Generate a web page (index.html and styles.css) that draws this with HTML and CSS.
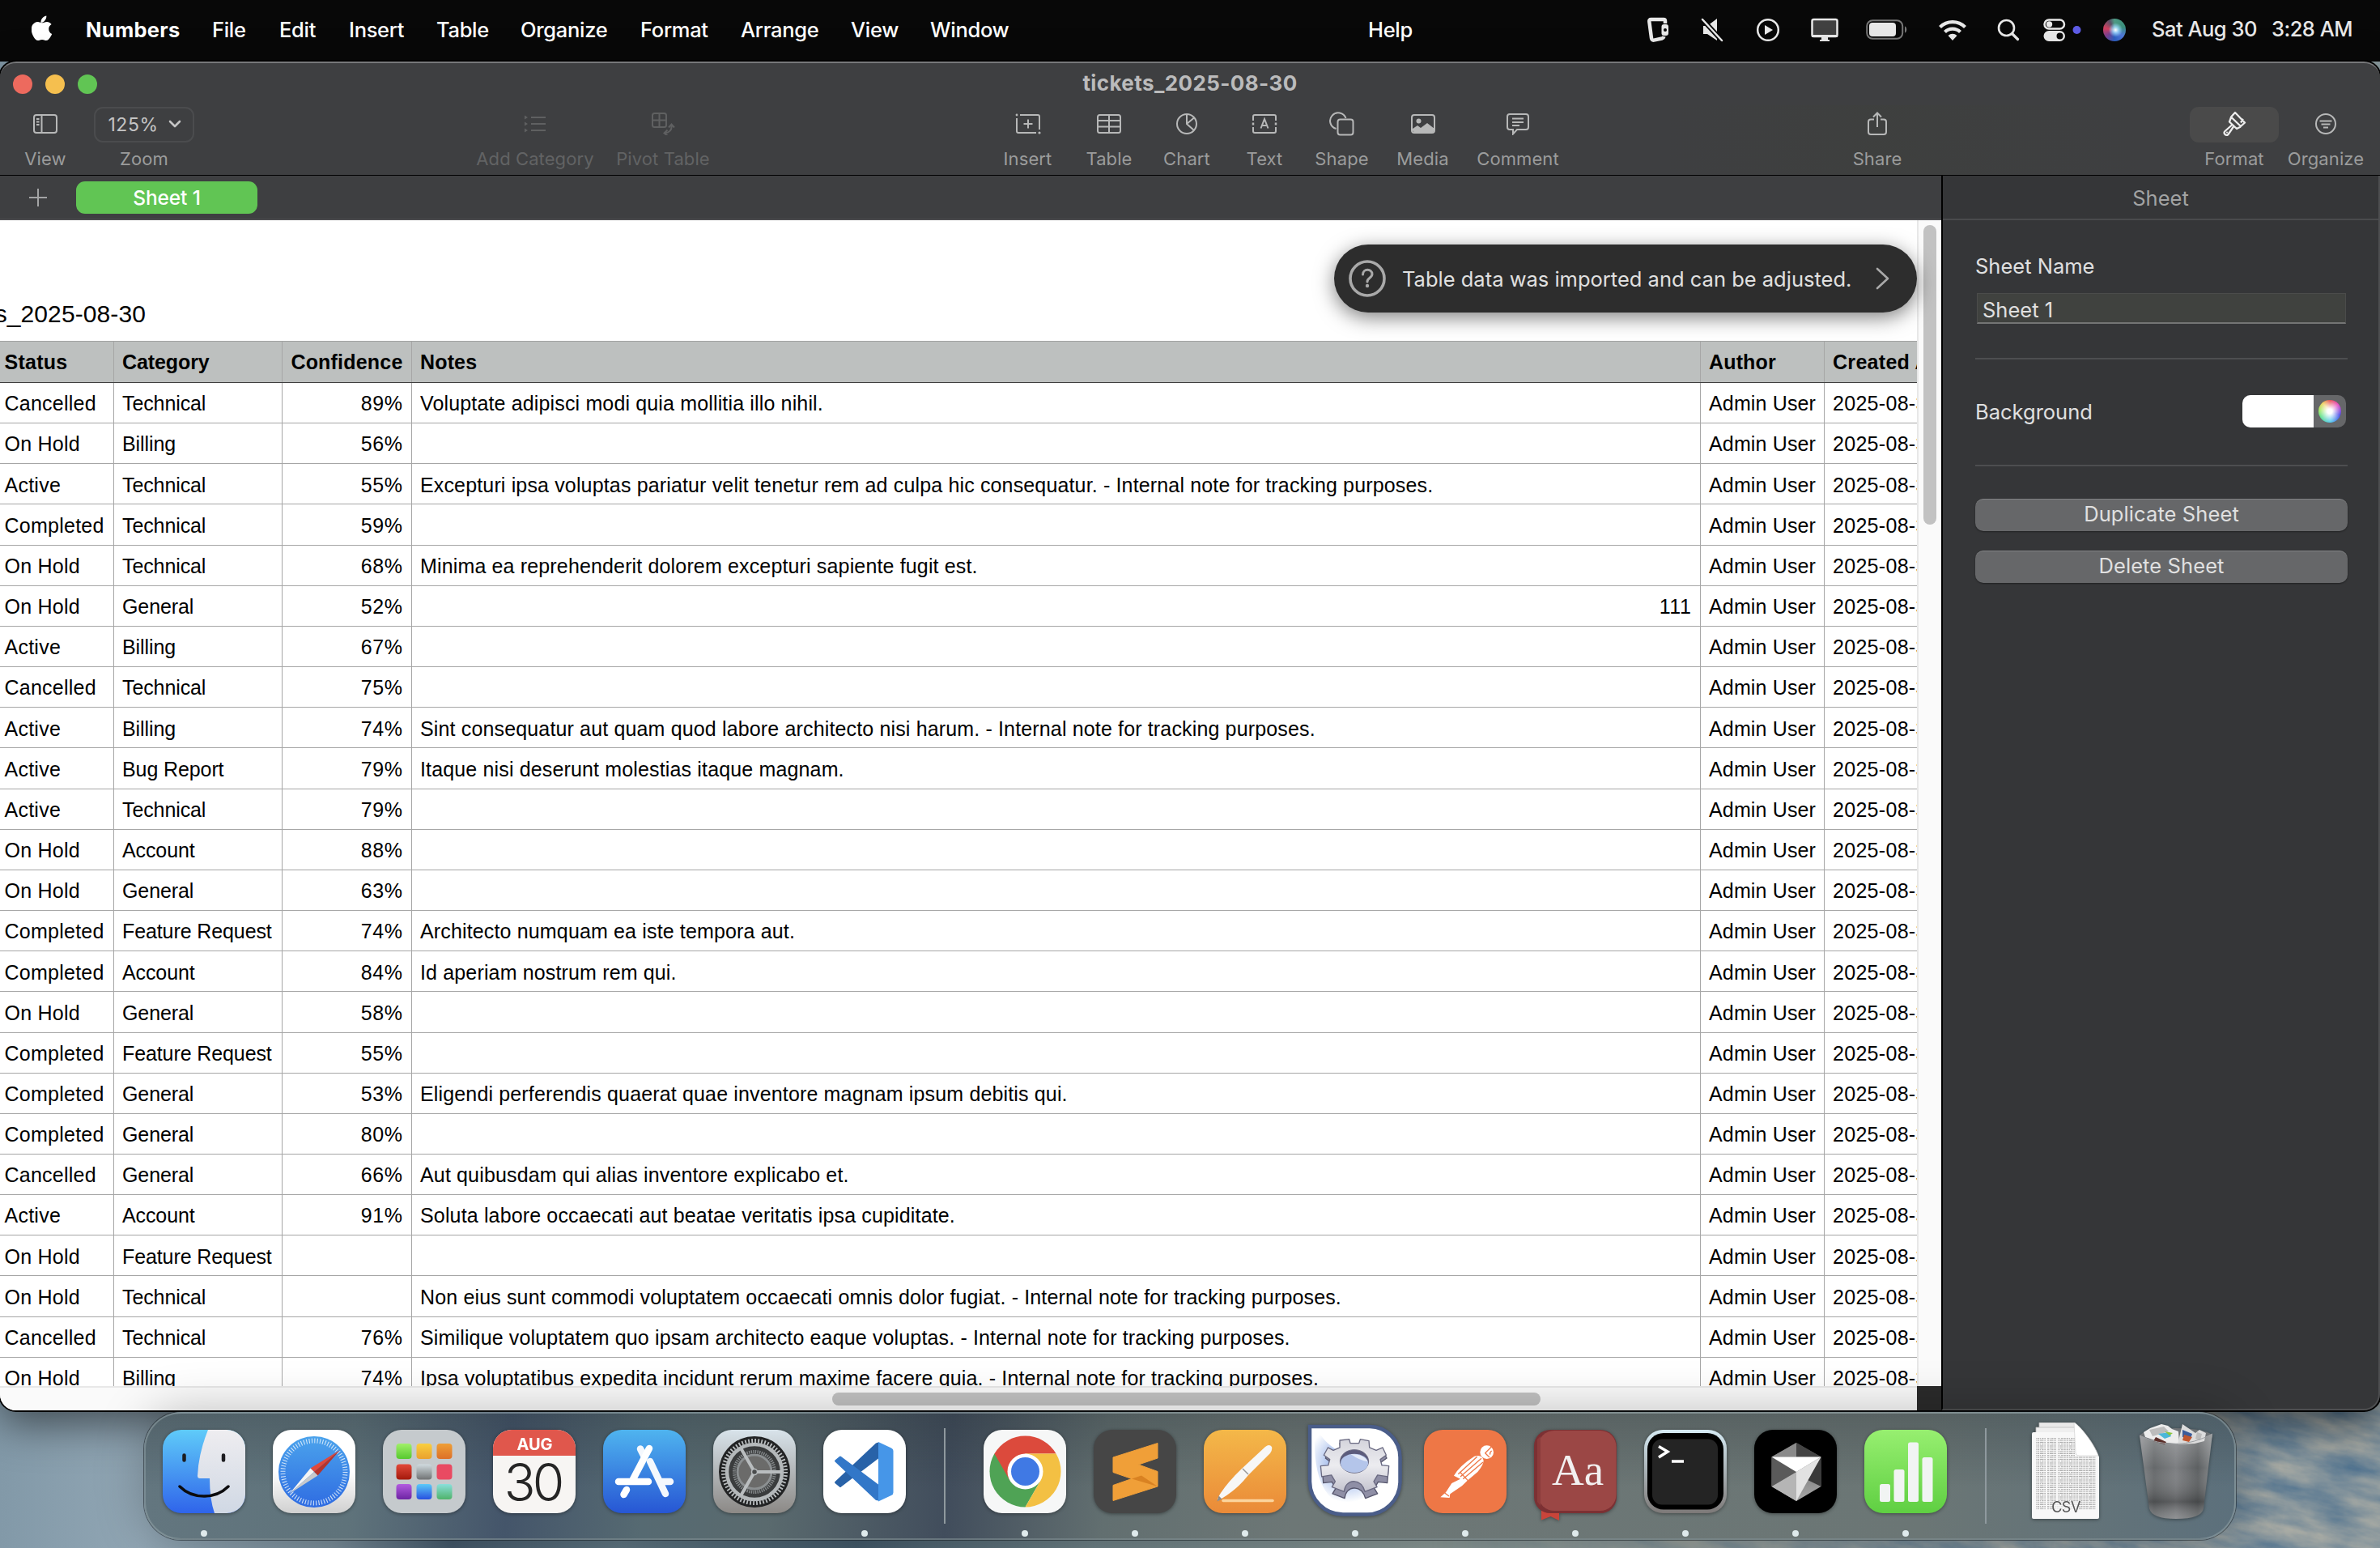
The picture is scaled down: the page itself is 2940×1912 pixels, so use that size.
FILE: index.html
```html
<!DOCTYPE html>
<html lang="en">
<head>
<meta charset="utf-8">
<title>tickets_2025-08-30</title>
<link rel="stylesheet" href="styles.css">
</head>
<body>
<div class="desktop">
<svg class="wallpaper" width="2940" height="190" viewBox="0 0 2940 190"><filter id="clouds" x="0" y="0" width="1" height="1" color-interpolation-filters="sRGB"><feTurbulence type="fractalNoise" baseFrequency=".012 .04" numOctaves="5" seed="4"/><feColorMatrix values=".5 0 0 0 .27  .32 0 0 0 .42  .12 0 0 0 .55  0 0 0 0 1"/></filter><g transform="rotate(14 2700 100)"><rect x="1700" y="-100" width="1500" height="600" filter="url(#clouds)"/></g></svg>
<header class="menubar">
  <svg class="apple" viewBox="0 0 26 32"><path fill="#fff" d="M18.300 0.500c.3 2.500-.8 4.700-2.200 6.200-1.400 1.500-3.300 2.300-4.600 2.200-.3-2.300.8-4.500 2.200-6C15 1.500 17 .6 18.300.5zM25.200 22.900c-.7 1.700-1.100 2.400-2 3.800-1.300 2-3 4.400-5.200 4.400-1.900 0-2.400-1.200-5-1.200s-3.200 1.200-5.100 1.200c-2.200 0-3.800-2.200-5.100-4.200C-.8 21.500-1 15 1.300 11.600c1.500-2.300 3.900-3.700 6.200-3.700 2.300 0 3.800 1.300 5.700 1.300 1.900 0 3-1.300 5.700-1.300 2 0 4.200 1.100 5.700 3-5 2.800-4.200 9.900.6 12z"/></svg>
  <nav class="menus">
    <b>Numbers</b><span>File</span><span>Edit</span><span>Insert</span><span>Table</span><span>Organize</span><span>Format</span><span>Arrange</span><span>View</span><span>Window</span><span>Help</span>
  </nav>
  <div class="status">
    <svg width="30" height="34" viewBox="0 0 30 34" fill="none" stroke="#e8e8e8"><path stroke-width="4.500" stroke-linejoin="round" d="M24 9V6q0-2-2-2H6.500q-2.500 0-2.200 2.500L7 27q.4 3 3 2.600L20 27.500q2-.5 2.500-2.500"/><rect x="19.500" y="10" width="8.500" height="14" rx="3" fill="#e8e8e8" stroke="none"/><circle cx="24" cy="17" r="2" fill="#080808" stroke="none"/></svg>
    <svg width="28" height="30" viewBox="0 0 28 30"><path fill="#e8e8e8" d="M3 10h5l12-9v27l-12-8H3z"/><path stroke="#080808" stroke-width="6" d="M2 2l24 26"/><path stroke="#e8e8e8" stroke-width="2.500" stroke-linecap="round" d="M2 2l24 26"/></svg>
    <svg width="30" height="30" viewBox="0 0 30 30"><circle cx="15" cy="15" r="12.800" fill="none" stroke="#e8e8e8" stroke-width="2.500"/><path fill="#e8e8e8" d="M11 9l10 6-10 6z"/></svg>
    <svg width="34" height="30" viewBox="0 0 34 30"><rect x="1.500" y="2" width="31" height="21" rx="2" fill="#404040" stroke="#e8e8e8" stroke-width="2.500"/><path fill="#e8e8e8" d="M1 21h32v3H1zM13 24h8v3h2v2H11v-2h2z"/></svg>
    <svg width="52" height="26" viewBox="0 0 52 26"><rect x="1.200" y="1.200" width="44" height="22.600" rx="7" fill="none" stroke="#777" stroke-width="2"/><rect x="4" y="4" width="33" height="17" rx="4" fill="#e8e8e8"/><path fill="#777" d="M48 8.500c3 1 3 7 0 8z"/></svg>
    <svg width="36" height="28" viewBox="0 0 36 28" fill="none" stroke="#e8e8e8" stroke-width="4.200"><path d="M2.500 10.500a22 22 0 0 1 31 0M8.500 16.500a13.500 13.500 0 0 1 19 0"/><path fill="#e8e8e8" stroke="none" d="M12.500 21a8 8 0 0 1 11 0L18 27z"/></svg>
    <svg width="28" height="28" viewBox="0 0 28 28" fill="none" stroke="#e8e8e8" stroke-width="2.600" stroke-linecap="round"><circle cx="11.500" cy="11.500" r="9.500"/><path stroke-width="3.200" d="M18.500 18.500l7 7"/></svg>
    <svg class="control" width="28" height="28" viewBox="0 0 28 28"><rect x="1.500" y="1.500" width="24.500" height="11" rx="5.500" fill="none" stroke="#e8e8e8" stroke-width="2.500"/><circle cx="7.500" cy="7" r="3.700" fill="#e8e8e8"/><rect x=".5" y="15" width="26.500" height="13" rx="6.500" fill="#e8e8e8"/><circle cx="20.500" cy="21.500" r="4" fill="#080808"/><circle cx="41.500" cy="14" r="5" fill="#5e5ce6"/></svg>
    <span class="siri"></span>
    <span class="clock"><span>Sat Aug 30</span><span>3:28 AM</span></span>
  </div>
</header>

<main class="window">
  <div class="titlebar">
    <div class="lights"><i class="red"></i><i class="yellow"></i><i class="green"></i></div>
    <div class="doc-title">tickets_2025-08-30</div>
  </div>
  <div class="toolbar">
    <div class="tool"><span class="glyph"><svg width="30" height="24" viewBox="0 0 30 24" fill="none" stroke="#b7b8b8" stroke-width="2"><rect x="1" y="1" width="28" height="22" rx="3"/><path d="M10.500 1v22M4 6h3.500M4 9.500h3.500M4 13h3.500"/></svg></span><span>View</span></div>
    <div class="tool"><span class="glyph zoom-box">125%<svg width="16" height="10" viewBox="0 0 16 10" fill="none" stroke="#c4c4c4" stroke-width="2.600" stroke-linecap="round" stroke-linejoin="round"><path d="M2 2l6 6 6-6"/></svg></span><span>Zoom</span></div>
    <div></div>
    <div class="tool off"><span class="glyph"><svg width="28" height="22" viewBox="0 0 28 22" stroke="#5f6061" stroke-width="2"><path d="M9 3h18M9 11h18M9 19h18"/><path fill="#5f6061" stroke="none" d="M1 .5l4 2.500-4 2.500zM1 8.500l4 2.500-4 2.500zM1 16.500l4 2.500-4 2.500z"/></svg></span><span>Add Category</span></div>
    <div class="tool off"><span class="glyph"><svg width="30" height="28" viewBox="0 0 30 28" fill="none" stroke="#5f6061" stroke-width="2"><rect x="2" y="1" width="17" height="17" rx="2.500"/><path d="M10.500 1v17M2 9.500h17M25.500 16q1 8-8 9.500M22 18.500l3.500-4 3.500 4M20.500 21.500l-4 4 4 3"/></svg></span><span>Pivot Table</span></div>
    <div></div>
    <div class="tool"><span class="glyph"><svg width="32" height="26" viewBox="0 0 32 26" fill="none" stroke="#b7b8b8" stroke-width="2"><path d="M6 2h22q2 0 2 2v16M26 24H4q-2 0-2-2V6M16 7.500v11M10.500 13h11"/><circle cx="2" cy="2" r="1.400" fill="#b7b8b8" stroke="none"/><circle cx="30" cy="24" r="1.600" fill="#b7b8b8" stroke="none"/></svg></span><span>Insert</span></div>
    <div class="tool"><span class="glyph"><svg width="30" height="24" viewBox="0 0 30 24" fill="none" stroke="#b7b8b8" stroke-width="2"><rect x="1" y="1" width="28" height="22" rx="2.500"/><path d="M1 8h28M1 15.500h28M15 1v22"/></svg></span><span>Table</span></div>
    <div class="tool"><span class="glyph"><svg width="28" height="28" viewBox="0 0 28 28" fill="none" stroke="#b7b8b8" stroke-width="2"><circle cx="14" cy="14" r="12"/><path d="M14 2v12l9 8M14 14l9-7.500"/></svg></span><span>Chart</span></div>
    <div class="tool"><span class="glyph"><svg width="32" height="26" viewBox="0 0 32 26" fill="none" stroke="#b7b8b8" stroke-width="2"><path d="M2 9V4q0-2 2-2h24q2 0 2 2v5M30 17v5q0 2-2 2H4q-2 0-2-2v-5M11.500 18.500L16 7l4.500 11.500M13 15h6"/><path stroke-width="2.500" d="M2 11.500v3M30 11.500v3"/></svg></span><span>Text</span></div>
    <div class="tool"><span class="glyph"><svg width="32" height="30" viewBox="0 0 32 30" fill="none" stroke="#b7b8b8" stroke-width="2"><path d="M8.500 21A10 10 0 1 1 20.500 8"/><rect x="10.500" y="9.500" width="19" height="19" rx="3"/></svg></span><span>Shape</span></div>
    <div class="tool"><span class="glyph"><svg width="30" height="24" viewBox="0 0 30 24"><rect x="1" y="1" width="28" height="22" rx="3" fill="none" stroke="#b7b8b8" stroke-width="2"/><circle cx="9.500" cy="8.500" r="3" fill="#b7b8b8"/><path fill="#b7b8b8" d="M2 18l6-4 4 3 8-6 9 7v2q0 2-2 2H4q-2 0-2-2z"/></svg></span><span>Media</span></div>
    <div class="tool"><span class="glyph"><svg width="30" height="28" viewBox="0 0 30 28" fill="none" stroke="#b7b8b8" stroke-width="2"><path d="M5 2h20q3 0 3 3v13q0 3-3 3H14l-5 5.500V21H5q-3 0-3-3V5q0-3 3-3zM8 7.500h14M8 12h14M8 16h9"/></svg></span><span>Comment</span></div>
    <div></div>
    <div class="tool"><span class="glyph"><svg width="26" height="30" viewBox="0 0 26 30" fill="none" stroke="#b7b8b8" stroke-width="2"><path d="M9 9.500H5q-3 0-3 3V25q0 3 3 3h16q3 0 3-3V12.500q0-3-3-3h-4M13 19V2M8 6.500L13 1.500l5 5"/></svg></span><span>Share</span></div>
    <div></div>
    <div class="tool"><span class="glyph selected"><svg width="30" height="32" viewBox="0 0 30 32" fill="none" stroke="#ececec" stroke-width="2.300" stroke-linejoin="round"><path d="M16 2l12 12.500-5 4.500L11 7.500zM11 8l-2 5.500 9 8.500 5-2.500M12.500 17L3.500 25c-2.500 2.500 1 6.500 4 4l6.500-9.500M23 14.500l3-4.500"/><circle cx="6" cy="26.500" r="1" fill="#ececec" stroke="none"/></svg></span><span>Format</span></div>
    <div class="tool"><span class="glyph"><svg width="28" height="28" viewBox="0 0 28 28" fill="none" stroke="#b7b8b8" stroke-width="2"><circle cx="14" cy="14" r="12"/><path d="M6.500 10.500h15M8.500 14.500h11M11 18.500h6"/></svg></span><span>Organize</span></div>
  </div>

  <div class="body">
    <section class="editor">
      <div class="tabs">
        <svg width="22" height="22" viewBox="0 0 22 22" stroke="#a3a4a5" stroke-width="2"><path d="M11 0v22M0 11h22"/></svg>
        <div class="tab">Sheet 1</div>
      </div>
      <div class="canvas">
        <div class="sheet">
          <div class="table-name">tickets_2025-08-30</div>
          <div class="row head"><span>Status</span><span>Category</span><span class="num">Confidence</span><span>Notes</span><span>Author</span><span>Created At</span></div>
          <div class="row"><span>Cancelled</span><span>Technical</span><span class="num">89%</span><span>Voluptate adipisci modi quia mollitia illo nihil.</span><span>Admin User</span><span>2025-08-30</span></div>
          <div class="row"><span>On Hold</span><span>Billing</span><span class="num">56%</span><span></span><span>Admin User</span><span>2025-08-30</span></div>
          <div class="row"><span>Active</span><span>Technical</span><span class="num">55%</span><span>Excepturi ipsa voluptas pariatur velit tenetur rem ad culpa hic consequatur. - Internal note for tracking purposes.</span><span>Admin User</span><span>2025-08-30</span></div>
          <div class="row"><span>Completed</span><span>Technical</span><span class="num">59%</span><span></span><span>Admin User</span><span>2025-08-30</span></div>
          <div class="row"><span>On Hold</span><span>Technical</span><span class="num">68%</span><span>Minima ea reprehenderit dolorem excepturi sapiente fugit est.</span><span>Admin User</span><span>2025-08-30</span></div>
          <div class="row"><span>On Hold</span><span>General</span><span class="num">52%</span><span class="num">111</span><span>Admin User</span><span>2025-08-30</span></div>
          <div class="row"><span>Active</span><span>Billing</span><span class="num">67%</span><span></span><span>Admin User</span><span>2025-08-30</span></div>
          <div class="row"><span>Cancelled</span><span>Technical</span><span class="num">75%</span><span></span><span>Admin User</span><span>2025-08-30</span></div>
          <div class="row"><span>Active</span><span>Billing</span><span class="num">74%</span><span>Sint consequatur aut quam quod labore architecto nisi harum. - Internal note for tracking purposes.</span><span>Admin User</span><span>2025-08-30</span></div>
          <div class="row"><span>Active</span><span>Bug Report</span><span class="num">79%</span><span>Itaque nisi deserunt molestias itaque magnam.</span><span>Admin User</span><span>2025-08-30</span></div>
          <div class="row"><span>Active</span><span>Technical</span><span class="num">79%</span><span></span><span>Admin User</span><span>2025-08-30</span></div>
          <div class="row"><span>On Hold</span><span>Account</span><span class="num">88%</span><span></span><span>Admin User</span><span>2025-08-30</span></div>
          <div class="row"><span>On Hold</span><span>General</span><span class="num">63%</span><span></span><span>Admin User</span><span>2025-08-30</span></div>
          <div class="row"><span>Completed</span><span>Feature Request</span><span class="num">74%</span><span>Architecto numquam ea iste tempora aut.</span><span>Admin User</span><span>2025-08-30</span></div>
          <div class="row"><span>Completed</span><span>Account</span><span class="num">84%</span><span>Id aperiam nostrum rem qui.</span><span>Admin User</span><span>2025-08-30</span></div>
          <div class="row"><span>On Hold</span><span>General</span><span class="num">58%</span><span></span><span>Admin User</span><span>2025-08-30</span></div>
          <div class="row"><span>Completed</span><span>Feature Request</span><span class="num">55%</span><span></span><span>Admin User</span><span>2025-08-30</span></div>
          <div class="row"><span>Completed</span><span>General</span><span class="num">53%</span><span>Eligendi perferendis quaerat quae inventore magnam ipsum debitis qui.</span><span>Admin User</span><span>2025-08-30</span></div>
          <div class="row"><span>Completed</span><span>General</span><span class="num">80%</span><span></span><span>Admin User</span><span>2025-08-30</span></div>
          <div class="row"><span>Cancelled</span><span>General</span><span class="num">66%</span><span>Aut quibusdam qui alias inventore explicabo et.</span><span>Admin User</span><span>2025-08-30</span></div>
          <div class="row"><span>Active</span><span>Account</span><span class="num">91%</span><span>Soluta labore occaecati aut beatae veritatis ipsa cupiditate.</span><span>Admin User</span><span>2025-08-30</span></div>
          <div class="row"><span>On Hold</span><span>Feature Request</span><span class="num"></span><span></span><span>Admin User</span><span>2025-08-30</span></div>
          <div class="row"><span>On Hold</span><span>Technical</span><span class="num"></span><span>Non eius sunt commodi voluptatem occaecati omnis dolor fugiat. - Internal note for tracking purposes.</span><span>Admin User</span><span>2025-08-30</span></div>
          <div class="row"><span>Cancelled</span><span>Technical</span><span class="num">76%</span><span>Similique voluptatem quo ipsam architecto eaque voluptas. - Internal note for tracking purposes.</span><span>Admin User</span><span>2025-08-30</span></div>
          <div class="row"><span>On Hold</span><span>Billing</span><span class="num">74%</span><span>Ipsa voluptatibus expedita incidunt rerum maxime facere quia. - Internal note for tracking purposes.</span><span>Admin User</span><span>2025-08-30</span></div>
        </div>
        <div class="vscroll"><i></i></div>
        <div class="hscroll"><i></i></div>
        <div class="corner"></div>
        <div class="toast">
          <svg width="46" height="46" viewBox="0 0 46 46" fill="none" stroke="#a9a9a9"><circle cx="23" cy="23" r="21" stroke-width="3.600"/><path stroke-width="3" stroke-linecap="round" d="M17.500 18c0-7.500 11.500-7.500 11.500-.5 0 5-6 4.500-6 9.500"/><circle cx="23" cy="32" r="2.200" fill="#a9a9a9" stroke="none"/></svg>
          <span>Table data was imported and can be adjusted.</span>
          <svg width="18" height="28" viewBox="0 0 18 28" fill="none" stroke="#a9a9a9" stroke-width="2.600" stroke-linecap="round" stroke-linejoin="round"><path d="M2 2l13 12L2 26"/></svg>
        </div>
      </div>
    </section>
    <aside class="inspector">
      <div class="inspector-title">Sheet</div>
      <div class="inspector-body">
        <label>Sheet Name</label>
        <div class="field">Sheet 1</div>
        <hr>
        <div class="bg-row"><span>Background</span><span class="well"><i class="swatch"></i><i class="wheel"></i></span></div>
        <hr>
        <div class="btn">Duplicate Sheet</div>
        <div class="btn">Delete Sheet</div>
      </div>
    </aside>
  </div>
</main>

<footer class="dock">
  <div class="app run"><svg viewBox="0 0 102 103"><defs><linearGradient id="fa" x2="0" y2="1"><stop stop-color="#5fcbf9"/><stop offset="1" stop-color="#2f64ea"/></linearGradient><linearGradient id="fb" x2="0" y2="1"><stop stop-color="#eeedf0"/><stop offset="1" stop-color="#d0d8e4"/></linearGradient><clipPath id="sq"><rect width="102" height="103" rx="23"/></clipPath></defs><g clip-path="url(#sq)"><path fill="url(#fa)" d="M0 0h102v103H0z"/><path fill="url(#fb)" d="M56 0Q44 30 43 57q0 3 3 3h12q0 26 6 43h38V0z"/></g><path fill="none" stroke="#1c1c20" stroke-width="4.500" stroke-linecap="round" d="M26.500 31.500v6M75 31.500v6"/><path fill="none" stroke="#0c0c0e" stroke-width="3.500" stroke-linecap="round" d="M21 70q12 12 30 12t30-12"/></svg></div>
  <div class="app"><svg viewBox="0 0 102 103"><defs><linearGradient id="sa" x2="0" y2="1"><stop stop-color="#fff"/><stop offset=".5" stop-color="#fff"/><stop offset="1" stop-color="#d0d0d0"/></linearGradient><linearGradient id="sb" x2="0" y2="1"><stop stop-color="#4ba3ec"/><stop offset="1" stop-color="#2f6ce2"/></linearGradient></defs><rect width="102" height="103" rx="23" fill="url(#sa)"/><circle cx="51" cy="52" r="44" fill="url(#sb)"/><circle cx="51" cy="52" r="38.500" fill="none" stroke="#e8f2fc" stroke-width="6" stroke-dasharray="1.100 2.260" opacity=".85"/><path fill="#e0483c" d="M83 25L46.500 47.500l4.500 4.500z"/><path fill="#b5342c" d="M83 25L55.500 56.500 51 52z"/><path fill="#f4f4f4" d="M20.500 79L46.500 47.500 51 52z"/><path fill="#c6c9cc" d="M20.500 79l35-22.500L51 52z"/></svg></div>
  <div class="app"><svg viewBox="0 0 102 103"><defs><linearGradient id="l1" x2="0" y2="1"><stop stop-color="#a1f06a"/><stop offset="1" stop-color="#57c92f"/></linearGradient><linearGradient id="l2" x2="0" y2="1"><stop stop-color="#f9cf3f"/><stop offset="1" stop-color="#eaa12f"/></linearGradient><linearGradient id="l3" x2="0" y2="1"><stop stop-color="#ee9f36"/><stop offset="1" stop-color="#dd7028"/></linearGradient><linearGradient id="l4" x2="0" y2="1"><stop stop-color="#e2493a"/><stop offset="1" stop-color="#a4190c"/></linearGradient><linearGradient id="l5" x2="0" y2="1"><stop stop-color="#d0dade"/><stop offset="1" stop-color="#707374"/></linearGradient><linearGradient id="l7" x2="0" y2="1"><stop stop-color="#b35be0"/><stop offset="1" stop-color="#6d24a3"/></linearGradient><linearGradient id="l8" x2="0" y2="1"><stop stop-color="#5bcaf8"/><stop offset="1" stop-color="#2750e0"/></linearGradient><linearGradient id="l9" x2="0" y2="1"><stop stop-color="#8adfdb"/><stop offset="1" stop-color="#4fb36a"/></linearGradient></defs><rect width="102" height="103" rx="23" fill="#c5cacd"/><rect x="16.500" y="17" width="19" height="19" rx="4" fill="url(#l1)"/><rect x="41.500" y="17" width="19" height="19" rx="4" fill="url(#l2)"/><rect x="66.500" y="17" width="19" height="19" rx="4" fill="url(#l3)"/><rect x="16.500" y="42.500" width="19" height="19" rx="4" fill="url(#l4)"/><rect x="41.500" y="42.500" width="19" height="19" rx="4" fill="url(#l5)"/><rect x="66.500" y="42.500" width="19" height="19" rx="4" fill="#e94a62"/><rect x="16.500" y="67" width="19" height="19" rx="4" fill="url(#l7)"/><rect x="41.500" y="67" width="19" height="19" rx="4" fill="url(#l8)"/><rect x="66.500" y="67" width="19" height="19" rx="4" fill="url(#l9)"/></svg></div>
  <div class="app"><svg viewBox="0 0 102 103"><g clip-path="url(#sq)"><path fill="#f7f5f3" d="M0 0h102v103H0z"/><path fill="#e0574c" d="M0 0h102v32H0z"/></g><text x="51.500" y="25" class="cal-month">AUG</text><text x="49" y="88" class="cal-day">30</text></svg></div>
  <div class="app"><svg viewBox="0 0 102 103"><defs><linearGradient id="as" x2="0" y2="1"><stop stop-color="#4fb4ef"/><stop offset="1" stop-color="#2756d4"/></linearGradient></defs><rect width="102" height="103" rx="23" fill="url(#as)"/><g stroke="#f4f8fd" stroke-width="8.500" stroke-linecap="round"><path d="M46 23.500l4 8M58 39l19 40M83 64H71"/><path stroke="#fff" d="M57 23L37 61M19 64h37M29 74l-3.500 6"/></g></svg></div>
  <div class="app"><svg viewBox="0 0 102 103"><defs><linearGradient id="se" x2="0" y2="1"><stop stop-color="#d8e3ea"/><stop offset="1" stop-color="#8c8986"/></linearGradient></defs><rect width="102" height="103" rx="23" fill="url(#se)"/><circle cx="51" cy="52" r="44" fill="#222324"/><circle cx="51" cy="52" r="38.500" fill="none" stroke="#b9bdbf" stroke-width="5" stroke-dasharray="1.800 2.230"/><circle cx="51" cy="52" r="34" fill="#3a3c3d" stroke="#b4b8ba" stroke-width="4.500"/><circle cx="51" cy="52" r="25" fill="none" stroke="#85898b" stroke-width="4" stroke-dasharray="1.400 1.220"/><circle cx="51" cy="52" r="21" fill="#6b6b6a" stroke="#8b8f91" stroke-width="3"/><path stroke="#b9bdbf" stroke-width="4" d="M51 52h34M51 52L34 22.500M51 52L34 81.500"/><circle cx="51" cy="52" r="3.500" fill="#4a4c4d" stroke="#b9bdbf" stroke-width="1.500"/></svg></div>
  <div class="app run"><svg viewBox="0 0 102 103"><rect width="102" height="103" rx="23" fill="#fff"/><path fill="#2862a8" d="M68 15.500v20L22 70.500q-1 1-2 0l-5.500-4.500q-1-1 0-2L65 16.500z"/><path fill="#3277c8" d="M68 87.500v-20L22 33q-1-1-2 0l-5.500 4.500q-1 1 0 2L65 87z"/><path fill="#4696e8" d="M68 15l16 7.500q2.500 1 2.500 3.500v51.500q0 2.500-2.500 3.500L68 88.500z"/></svg></div>
  <div class="sep"></div>
  <div class="app run"><svg viewBox="0 0 102 103"><rect width="102" height="103" rx="23" fill="#f6f7f7"/><g><path fill="#dc4a3c" d="M51.500 51.500L13.400 29.500A44 44 0 0 1 89.600 29.500H51.500z"/><path fill="#4fa355" d="M51.500 51.500L13.400 29.500A44 44 0 0 0 51.500 95.500L70.500 62.500z"/><path fill="#f3c043" d="M51.500 29.500H89.600A44 44 0 0 1 51.500 95.500L70.500 62.500z"/><path fill="#dc4a3c" d="M13.400 29.500L32.400 62.500 51.500 51.500V29.500z"/></g><circle cx="51.500" cy="51.500" r="22" fill="#fff"/><circle cx="51.500" cy="51.500" r="17.500" fill="#4079e4"/></svg></div>
  <div class="app run"><svg viewBox="0 0 102 103"><rect width="102" height="103" rx="23" fill="#464646"/><path fill="#f09f38" stroke="#f09f38" stroke-linejoin="round" d="M79 16.500V35L55.500 43 79 51.500V70L24 87.500V68.500L47 60.500 24 52.500V34z"/><path fill="#d98222" d="M79 70L47 60.500l12-4z"/></svg></div>
  <div class="app run"><svg viewBox="0 0 102 103"><defs><linearGradient id="pg" x2="0" y2="1"><stop stop-color="#f4b849"/><stop offset="1" stop-color="#ea8a38"/></linearGradient></defs><rect width="102" height="103" rx="23" fill="url(#pg)"/><path stroke="#fbd49d" stroke-width="3.500" stroke-linecap="round" d="M24 87.500h61"/><path fill="#f7f7f7" d="M76 21q5-4 8 0 1 4-2 8L55 56q-14 18-33 29l-5 3q0-4 4-10 9-14 27-31z"/><path stroke="#999" stroke-width="1.500" d="M48 48l7 7"/><path fill="#8b8b8b" d="M16.500 88.500l2-7 4 4z"/></svg></div>
  <div class="app run big"><svg viewBox="0 0 118 116"><defs><linearGradient id="gg" x2="0" y2="1"><stop stop-color="#d4d4dc"/><stop offset=".5" stop-color="#ececf0"/><stop offset="1" stop-color="#c4c4cf"/></linearGradient><radialGradient id="gb" cx=".4" cy=".42" r=".5"><stop offset=".4" stop-color="#a5bdec"/><stop offset="1" stop-color="#fff"/></radialGradient></defs><path fill="#fff" stroke="#4a5d89" stroke-width="4.500" d="M3 3h74A38 38 0 0 1 114.500 41v31A41 41 0 0 1 74 111.500H44A41 41 0 0 1 3 71z"/><path fill="url(#gb)" d="M13 8q20 38 98 42-2 52-50 54Q8 100 9 20z"/><g transform="translate(-13.300 -18.700) scale(.3333)" stroke-linejoin="round"><path fill="#8f8fa6" stroke="#55556c" stroke-width="4" fill-rule="evenodd" d="M160 127l35-4 4 15h32l5-15 32 6 2 25 25 10 24-10 15 28-22 16 6 22 22 2-4 52-34-4-14 24 12 20-45 17q-10-36-41-38-31 2-36 38l-45-17 12-20-14-24-32 4-4-52 26-2 6-22-20-16 15-28 20 10 22-10z"/><path fill="url(#gg)" stroke="#6a6a82" stroke-width="4" fill-rule="evenodd" d="M160 116l35-4 4 15h32l5-15 32 6 2 25 25 10 24-10 13 28-22 16 6 22 26 2-4 40-38-6-14 24 12 20-45 17q-10-36-41-38-31 2-36 38l-45-17 12-20-14-24-36 6-4-40 28-2 6-22-22-16 15-28 20 10 24-10z"/><ellipse cx="214" cy="194" rx="53" ry="43" fill="#5c5c7c" stroke="#6a6a82" stroke-width="3"/><ellipse cx="214" cy="201" rx="51" ry="35" fill="#b4c5ea"/><path fill="#e4ebf8" d="M200 167q50 0 64 28-30-4-64-28z"/></g></svg></div>
  <div class="app run"><svg viewBox="0 0 102 103"><rect width="102" height="103" rx="23" fill="#ee7746"/><g transform="translate(-157 -26) scale(.3333)" stroke="#ee7746" stroke-width="4" stroke-linejoin="round"><circle cx="704" cy="161" r="25" fill="#fff" stroke="none"/><path fill="none" d="M722 140l-24 24 16 16M722 156q-8 6-6 14"/><path fill="#fff" stroke="none" d="M658 176q30-8 34 16 0 16-22 42l-38 32-20 20-44 30-2 14-34-2 20-18 22-34 32-16-24-12q20-36 76-72z"/><path fill="none" d="M684 184l-78 68M690 198l-74 62M604 234l30 32M668 178l-70 64M548 312l16 12"/></g></svg></div>
  <div class="app run"><svg class="spill" viewBox="0 0 102 103"><path fill="#c9443a" d="M9 92h22v20l-10.500-5L9 111.500z"/><rect width="102" height="103" rx="20" fill="#7c3033"/><rect x="5" y="1" width="96.500" height="99" rx="20" fill="#9b4745"/><path fill="#8b3b3b" d="M8 8v86l-4-5V12z"/><text x="54" y="67.500" class="dict">Aa</text></svg></div>
  <div class="app run"><svg viewBox="0 0 102 103"><defs><linearGradient id="tm" x2="0" y2="1"><stop stop-color="#d5eaf3"/><stop offset="1" stop-color="#7d7978"/></linearGradient></defs><rect width="102" height="103" rx="23" fill="url(#tm)"/><rect x="4" y="4" width="94" height="94.500" rx="20" fill="#000"/><rect x="10" y="11.500" width="81" height="81" rx="12" fill="#242424"/><path fill="none" stroke="#fff" stroke-width="3.500" d="M18 20.500l11 6.500-11 7M34 39h15"/></svg></div>
  <div class="app run"><svg viewBox="0 0 102 103"><defs><linearGradient id="cu" x2="0" y2="1"><stop stop-color="#555"/><stop offset="1" stop-color="#aaa"/></linearGradient></defs><rect width="102" height="103" rx="23" fill="#000"/><path fill="url(#cu)" d="M52 16l30.500 17.500v36.500L52 88 21.500 70V33.500z"/><path fill="#8a8a8a" d="M52 16L21.500 33.500H52z"/><path fill="#444" d="M52 16v17.500h30.500z"/><path fill="#3a3a3a" d="M82.500 33.500V70L66 62z"/><path fill="#b5b5b5" d="M52 52L21.500 70 52 88z"/><path fill="#5a5a5a" d="M21.500 33.500V70L52 52z"/><path fill="#fff" d="M21.500 33.500h61L52 52z"/><path fill="#e2e2e2" d="M82.500 33.500L52 88V52z"/></svg></div>
  <div class="app run"><svg viewBox="0 0 102 103"><defs><linearGradient id="nu" x2="0" y2="1"><stop stop-color="#97ef70"/><stop offset="1" stop-color="#5fcf42"/></linearGradient></defs><rect width="102" height="103" rx="23" fill="url(#nu)"/><g fill="#f1f4f3"><rect x="19" y="67" width="13" height="22" rx="2.500"/><rect x="36.500" y="49" width="13" height="40" rx="2.500"/><rect x="54" y="15.500" width="13" height="73.500" rx="2.500"/><rect x="71.500" y="34" width="13" height="55" rx="2.500"/></g></svg></div>
  <div class="sep"></div>
  <div class="app file"><svg viewBox="0 0 84 120"><defs><pattern id="tx" width="12" height="7" patternUnits="userSpaceOnUse"><path stroke="#a3a3a3" stroke-width="1" stroke-dasharray="2.500 .8" d="M0 1h12M0 3.400h12M0 5.700h11"/></pattern></defs><path fill="#e9e9e9" stroke="#bbb" stroke-width=".8" d="M9 0h44v60H9z"/><path fill="#efefef" stroke="#bbb" stroke-width=".8" d="M5 6h50v60H5z"/><path fill="#f8f8f8" d="M0 14q0-2 2-2h50l31 30v75q0 2-2 2H2q-2 0-2-2z"/><path fill="url(#tx)" d="M5 19h48v23h26v66H5z"/><path stroke="#f8f8f8" stroke-width="2" d="M18 19v89M31 19v78"/><path fill="#fff" stroke="#d5d5d5" stroke-width=".8" d="M52 0c8 4 26 28 30 41H58q-4 0-4-4z"/><path fill="#f8f8f8" opacity=".7" d="M26 98h32v13H26z"/><text x="42" y="111" class="csv">CSV</text></svg></div>
  <div class="app trash"><svg viewBox="0 0 92 120"><defs><linearGradient id="tr"><stop stop-color="#85878a"/><stop offset=".2" stop-color="#66696b"/><stop offset=".5" stop-color="#7d7f82"/><stop offset=".8" stop-color="#5d6062"/><stop offset="1" stop-color="#85888a"/></linearGradient><linearGradient id="ts" x2="0" y2="1"><stop stop-color="#fff" stop-opacity=".25"/><stop offset=".4" stop-color="#fff" stop-opacity="0"/><stop offset=".8" stop-color="#000" stop-opacity=".25"/><stop offset="1" stop-color="#fff" stop-opacity=".15"/></linearGradient></defs><ellipse cx="46" cy="17" rx="45" ry="10" fill="#6d7174"/><path fill="url(#tr)" d="M1 16Q46 38 91 14L80 106q-2 13-34 13-30 0-33-13z"/><path fill="url(#ts)" d="M1 16Q46 38 91 14L80 106q-2 13-34 13-30 0-33-13z"/><path fill="#ececec" d="M6 12l8-5 14-5 8 2 5 4 8 3 1 15q-16 0-30-4L8 18z"/><path fill="#dcdcdc" d="M48 27L54 2l16 11 5-4 8 4-2 10-12 3z"/><path fill="#bcbcbc" d="M13 9l18-4 6 6-20 6zM72 12l6 2-2 8-6-2z"/><path fill="#3b5c9a" d="M54 9l12 5-2 6-10-2z"/><path fill="#c0562e" d="M56 15l10 3-4 6-8-2z"/><path fill="#4cb7d8" d="M24 14l14-2 2 5-8 3z"/><path fill="#5b2f2a" d="M21 18l13 6-2 3-14-4z"/><path fill="#8cc43c" d="M32 11l10 2-4 3z"/><path fill="none" stroke="#9da0a3" d="M1 16Q46 38 91 14"/></svg></div>
</footer>
</div>
</body>
</html>
```
FILE: styles.css
```css
* { box-sizing: border-box; }
body { margin: 0; }
i { font-style: normal; display: block; }

.desktop {
  width: 2940px;
  height: 1912px;
  overflow: hidden;
  position: relative;
  display: flex;
  flex-direction: column;
  font-family: Inter, "Liberation Sans", sans-serif;
  font-size: 25.5px;
  color: #e0e0e0;
  background:
    linear-gradient(90deg, #8299a8 0, #91a6b4 6%, #788c98 14%, #43586a 19%, #5d7480 26%, #435a6a 36%, #6c7f84 46%, #889694 60%, #8b9594 82%, #7f8d92 92%, #8b9b9f 100%);
}
.wallpaper {
  position: absolute;
  left: 0;
  bottom: 0;
  -webkit-mask-image: linear-gradient(90deg, transparent 60%, #000 88%);
  mask-image: linear-gradient(90deg, transparent 60%, #000 88%);
}

/* Menu bar */
.menubar {
  height: 76px;
  flex: none;
  position: relative;
  background: #080808;
  display: flex;
  align-items: center;
  color: #fff;
  padding-left: 39px;
}
.apple { width: 26px; height: 32px; margin: -6px 0 0; flex: none; }
.menus {
  margin: -3px 0 0 41px;
  width: 1908px;
  display: grid;
  grid-template-columns: 156px 83px 86px 108px 104px 148px 124px 136px 98px 541px auto;
  white-space: nowrap;
  letter-spacing: -0.3px;
}
.menus b { font-weight: 700; letter-spacing: .3px; }
.menus span { font-weight: 500; }
.status {
  display: grid;
  grid-template-columns: 67px 68px 70px 70px 84px 78px 60px 54px 94px auto;
  justify-items: center;
  align-items: center;
  margin-top: -3px;
  color: #e8e8e8;
}
.control { overflow: visible; }
.siri {
  width: 28px;
  height: 28px;
  border-radius: 50%;
  background:
    radial-gradient(circle at 55% 50%, #fff 0, rgba(160, 220, 255, .8) 18%, transparent 42%),
    conic-gradient(#4e9a84, #3a8f7c 20%, #4f77d9 35%, #2b5fc0 50%, #7a3f8f 65%, #d2405f 78%, #5b5068 92%, #4e9a84);
}
.clock { display: flex; gap: 18px; white-space: nowrap; font-weight: 500; letter-spacing: -0.5px; margin: -2px 0 0 -1px; }

/* Window */
.window {
  height: 1666px;
  flex: none;
  position: relative;
  background: #3e3f41;
  border-radius: 20px;
  overflow: hidden;
  display: flex;
  flex-direction: column;
  border-top: 2px solid #77787a;
  box-shadow: 0 0 0 2px #000, 0 18px 50px rgba(0, 0, 0, .5);
}
.titlebar { height: 52px; flex: none; display: grid; grid-template-columns: 1fr auto 1fr; align-items: center; }
.lights { display: flex; gap: 16px; padding-left: 16px; }
.lights i { width: 24px; height: 24px; border-radius: 50%; }
.red { background: #ed6a5e; }
.yellow { background: #f5bf4f; }
.green { background: #61c554; }
.doc-title { font-size: 26px; font-weight: 700; color: #bbbbbc; letter-spacing: .4px; margin-top: -3px; }
.toolbar {
  height: 87px;
  flex: none;
  border-bottom: 1px solid #000;
  display: grid;
  grid-template-columns: 112px 132px 338px 158px 158px 321px 101px 100px 92px 100px 91px 109px 126px 321px 120px 321px 120px 106px;
  font-size: 22px;
  color: #9b9c9c;
  padding-top: 2px;
  background: linear-gradient(90deg, transparent 70%, rgba(62, 64, 60, .5) 79%, transparent 90%);
}
.tool { display: flex; flex-direction: column; align-items: center; white-space: nowrap; letter-spacing: .1px; }
.tool.off { color: #626364; }
.glyph { height: 44px; display: flex; align-items: center; justify-content: center; margin-bottom: 7px; }
.glyph svg { display: block; margin-top: -2px; }
.zoom-box { width: 124px; border: 2px solid #4b4c4e; border-radius: 11px; gap: 13px; color: #c4c4c4; font-size: 23px; letter-spacing: .5px; padding-left: 2px; }
.selected { width: 110px; background: #4a4a4a; border-radius: 11px; }

.body { flex: 1; display: flex; min-height: 0; }
.editor { width: 2398px; display: flex; flex-direction: column; }
.tabs {
  height: 55px;
  flex: none;
  border-bottom: 2px solid #4c4c4f;
  display: flex;
  align-items: center;
  gap: 36px;
  padding-left: 36px;
}
.tab {
  width: 224px;
  height: 40px;
  border-radius: 11px;
  background: #61c554;
  color: #fff;
  font-size: 24.5px;
  font-weight: 500;
  letter-spacing: -0.1px;
  display: flex;
  align-items: center;
  justify-content: center;
}
.canvas {
  flex: 1;
  position: relative;
  display: grid;
  grid-template-columns: 2368px 30px;
  grid-template-rows: 1440px 30px;
  min-height: 0;
  background: #fff;
}
.sheet {
  overflow: hidden;
  background: #fff;
  color: #000;
  font: 25px "Liberation Sans", Arial, sans-serif;
}
.table-name {
  height: 149px;
  width: 180px;
  display: flex;
  justify-content: flex-end;
  white-space: nowrap;
  padding-top: 98px;
  font-size: 30px;
  letter-spacing: .1px;
  line-height: 36px;
}
.row {
  width: 2460px;
  height: 50.167px;
  display: grid;
  grid-template-columns: 141px 208px 160px 1592px 153px auto;
  border-bottom: 1px solid #a6a6a6;
}
.row span {
  border-right: 1px solid #a6a6a6;
  padding: 2.500px 10px 0 10px;
  display: flex;
  align-items: center;
  white-space: nowrap;
  letter-spacing: .15px;
}
.row span:first-child { padding-left: 5.500px; letter-spacing: .25px; }
.row span:nth-child(2) { letter-spacing: -0.1px; }
.row span:last-child { letter-spacing: .3px; }
.row .num { justify-content: flex-end; padding-right: 10.500px; letter-spacing: .6px; }
.head {
  height: 52px;
  background: #bdc0bf;
  border-top: 1px solid #a0a2a1;
  border-bottom-color: #3f3f3f;
  font-weight: bold;
}
.head span { padding-top: 1px; }
.head .num { letter-spacing: .2px; }
.vscroll { background: #fafafa; border-left: 2px solid #e8e8e8; padding: 6px 0 0 6px; }
.vscroll i { width: 16px; height: 370px; border-radius: 8px; background: #c2c2c2; }
.hscroll { background: #fafafa; border-top: 2px solid #e8e8e8; padding: 6px 0 0 1028px; }
.hscroll i { width: 875px; height: 16px; border-radius: 8px; background: #c2c2c2; }
.corner { background: #2b2b2b; }
.toast {
  position: absolute;
  left: 1648px;
  top: 30px;
  width: 720px;
  height: 84px;
  border-radius: 42px;
  background: #2d2d2d;
  box-shadow: 0 6px 24px rgba(0, 0, 0, .5);
  display: flex;
  align-items: center;
  padding: 0 33px 0 18px;
  white-space: nowrap;
  color: #e0e0e0;
}
.toast span { flex: 1; padding-left: 20px; letter-spacing: 0; }

/* Inspector */
.inspector { flex: 1; border-left: 2px solid #000; background: #353638; border-right: 2px solid #4d4e50; border-bottom: 2px solid #4d4e50; border-bottom-right-radius: 20px; }
.inspector-title {
  height: 55px;
  border-bottom: 2px solid #4a4b4d;
  color: #a2a3a3;
  text-align: center;
  line-height: 55px;
}
.inspector-body { padding: 38px 38px 0 40px; display: flex; flex-direction: column; }
.inspector label { height: 38px; line-height: 38px; margin-bottom: 14px; }
.field { height: 38px; margin: 0 2px; background: #40423f; border: 1px solid #4b4c4b; border-bottom: 2px solid #747574; padding-left: 6px; line-height: 39px; }
.inspector hr { width: 460px; height: 2px; border: 0; background: #4d4e50; margin: 42px 0 44px; }
.bg-row { height: 40px; display: flex; justify-content: space-between; align-items: center; margin-right: 2px; }
.bg-row + hr { margin: 46px 0 40px; }
.well { width: 128px; height: 40px; border-radius: 10px; overflow: hidden; display: flex; background: #666769; }
.swatch { width: 88px; background: #fff; }
.wheel {
  width: 28px;
  height: 28px;
  margin: 6px;
  border-radius: 50%;
  background: radial-gradient(circle, #fff 15%, transparent 70%), conic-gradient(#e85555, #e64bc0 50deg, #4b4be8 110deg, #55c8ee 175deg, #5fe08a 240deg, #a5e85f 280deg, #f0d060 320deg, #e85555);
}
.btn { height: 40px; border-radius: 10px; background: #666769; border-top: 1px solid #828385; box-shadow: 0 1px 2px rgba(0, 0, 0, .4); text-align: center; line-height: 36px; margin-bottom: 24px; letter-spacing: .1px; }

/* Dock */
.dock {
  width: 2584px;
  height: 158px;
  margin: 2px 0 0 178px;
  flex: none;
  position: relative;
  border-radius: 46px;
  padding: 0 4px;
  border: 2px solid rgba(150, 165, 170, .5);
  display: flex;
  align-items: flex-start;
  background:
    linear-gradient(rgba(30, 38, 42, .25), transparent 60%),
    linear-gradient(94deg, #63767f 0, #5f737b 10%, #44556a 17.500%, #566a72 24%, #5a6a6e 30%, #414d5c 38.500%, #626f70 46%, #6d7776 55%, #6b7675 85%, #5c707c 100%);
  box-shadow: 0 0 0 1px rgba(20, 25, 30, .5), 0 0 60px rgba(0, 0, 0, .25);
}
.app { width: 136px; height: 154px; padding-top: 20px; display: flex; flex-direction: column; align-items: center; flex: none; }
.app svg { width: 102px; height: 103px; flex: none; filter: drop-shadow(0 1px 2px rgba(0, 0, 0, .4)); }
.app .spill { overflow: visible; }
.run::after { content: ""; width: 8px; height: 8px; margin-top: 21px; border-radius: 50%; background: #dfeaec; }
.app.big { padding-top: 13px; }
.app.big svg { width: 118px; height: 116px; }
.app.big::after { margin-top: 15px; }
.app.file, .app.trash { padding-top: 11px; }
.app.file svg { width: 84px; height: 120px; }
.app.trash svg { width: 92px; height: 120px; }
.sep { width: 62px; flex: none; height: 118px; margin-top: 18px; display: flex; justify-content: center; }
.sep::after { content: ""; width: 2px; background: #8f999e; }
.cal-month { font: 700 20px Inter, sans-serif; fill: #fff; text-anchor: middle; }
.cal-day { font: 300 64px Inter, sans-serif; fill: #262626; text-anchor: middle; letter-spacing: -4px; }
.dict { font: 55px "Liberation Serif", serif; fill: #f2f0f0; text-anchor: middle; }
.csv { font: 18px Inter, sans-serif; fill: #555; text-anchor: middle; letter-spacing: -0.5px; }
```
